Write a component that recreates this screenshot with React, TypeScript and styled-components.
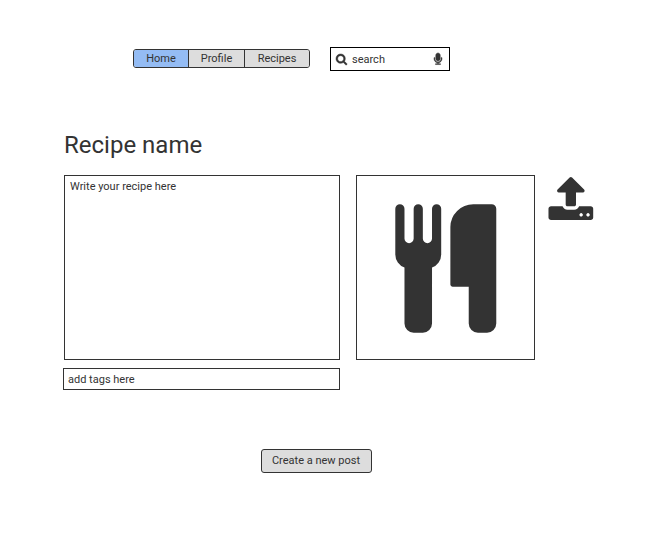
import React from "react";
import styled, { createGlobalStyle } from "styled-components";

const GlobalStyle = createGlobalStyle`
  * { box-sizing: border-box; }
  body {
    margin: 0;
    background: #fff;
    color: #333;
    font-family: Roboto, sans-serif;
    font-size: 11px;
    line-height: 13px;
  }
  button, input, textarea { font: inherit; color: inherit; }
`;

const Page = styled.main`
  height: 546px;
  overflow: hidden;
`;

const Header = styled.header`
  display: flex;
  align-items: flex-start;
  gap: 20px;
  padding: 47px 0 0 133px;
  height: 131px;
`;

const Nav = styled.nav`
  display: flex;
  width: 177px;
  height: 19px;
  margin-top: 2px;
  border: 1px solid #333;
  border-radius: 3px;
  background: #ddd;
  overflow: hidden;
`;

const NavItem = styled.button<{ $active?: boolean; $width: number }>`
  width: ${(p) => p.$width}px;
  padding: 0 0 1px;
  border: 0;
  background: ${(p) => (p.$active ? "#94bcf4" : "#ddd")};
  text-align: center;

  & + & { border-left: 1px solid #333; }
`;

const SearchBox = styled.label`
  display: flex;
  align-items: center;
  width: 120px;
  height: 24px;
  padding: 0 7px 0 5px;
  border: 1px solid #000;
`;

const SearchInput = styled.input`
  flex: 1;
  min-width: 0;
  margin-left: 5px;
  padding: 0;
  border: 0;
  outline: 0;
  background: transparent;

  &::placeholder { color: #333; opacity: 1; }
`;

const Icon = styled.svg`
  display: block;
  flex: none;
  fill: #333;
`;

const SmallIcon = styled(Icon)`
  overflow: visible;
  stroke: #333;
  stroke-width: 70;
`;

const Title = styled.h1`
  margin: 0 0 16px 64px;
  font-size: 24px;
  line-height: 28px;
  font-weight: 400;
`;

const Editor = styled.section`
  display: flex;
  align-items: flex-start;
  padding-left: 64px;
`;

const RecipeText = styled.textarea`
  display: block;
  width: 276px;
  height: 185px;
  margin: 0;
  padding: 4px 5px;
  border: 1px solid #333;
  border-radius: 0;
  outline: 0;
  resize: none;
  overflow: hidden;

  &::placeholder { color: #333; opacity: 1; }
`;

const Photo = styled.div`
  display: flex;
  align-items: flex-start;
  width: 179px;
  height: 185px;
  margin-left: 16px;
  padding: 28px 0 0 38px;
  border: 1px solid #333;
`;

const UploadButton = styled.button`
  margin: 2px 0 0 13px;
  padding: 0;
  border: 0;
  background: none;
`;

const Tags = styled.input`
  display: block;
  width: 277px;
  height: 22px;
  margin: 8px 0 0 63px;
  padding: 0 4px;
  border: 1px solid #333;
  border-radius: 0;
  outline: 0;

  &::placeholder { color: #333; opacity: 1; }
`;

const CreateButton = styled.button`
  display: block;
  width: 111px;
  height: 24px;
  margin: 59px 0 0 261px;
  padding: 0 1px 1px 0;
  border: 1px solid #333;
  border-radius: 3px;
  background: #ddd;
`;

const SearchIcon = () => (
  <SmallIcon width="11" height="11" viewBox="64 128 1664 1664">
    <path d="M1216 832q0-185-131.500-316.500t-316.500-131.500-316.500 131.500-131.500 316.500 131.500 316.500 316.500 131.500 316.500-131.500 131.500-316.500zM1728 1664q0 52-38 90t-90 38q-54 0-90-38l-343-342q-179 124-399 124-143 0-273.500-55.500t-225-150-150-225-55.500-273.500 55.500-273.500 150-225 225-150 273.500-55.500 273.500 55.500 225 150 150 225 55.500 273.500q0 220-124 399l343 343q37 37 37 90z" />
  </SmallIcon>
);

const MicIcon = () => (
  <SmallIcon width="8" height="13" viewBox="320 0 1152 1872">
    <path d="M1472 704v128q0 221-147.500 384.500t-364.500 187.500v132h256q26 0 45 19t19 45-19 45-45 19h-640q-26 0-45-19t-19-45 19-45 45-19h256v-132q-217-24-364.500-187.500t-147.500-384.500v-128q0-26 19-45t45-19 45 19 19 45v128q0 185 131.500 316.500t316.500 131.500 316.500-131.500 131.500-316.500v-128q0-26 19-45t45-19 45 19 19 45zM1216 320v512q0 132-94 226t-226 94-226-94-94-226v-512q0-132 94-226t226-94 226 94 94 226z" />
  </SmallIcon>
);

const CutleryIcon = () => (
  <Icon width="102" height="129" viewBox="-4 62 1422 1799">
    <path d="M640 128v640q0 61-35.500 111t-92.500 70v779q0 52-38 90t-90 38h-128q-52 0-90-38t-38-90v-779q-57-20-92.500-70t-35.500-111v-640q0-26 19-45t45-19 45 19 19 45v416q0 26 19 45t45 19 45-19 19-45v-416q0-26 19-45t45-19 45 19 19 45v416q0 26 19 45t45 19 45-19 19-45v-416q0-26 19-45t45-19 45 19 19 45zM1408 128v1600q0 52-38 90t-90 38h-128q-52 0-90-38t-38-90v-512h-224q-13 0-22.500-9.500t-9.500-22.500v-800q0-132 94-226t226-94h256q26 0 45 19t19 45z" />
  </Icon>
);

const UploadIcon = () => (
  <Icon width="46" height="43" viewBox="46 64 1712 1600">
    <path d="M1344 1472q0-26-19-45t-45-19-45 19-19 45 19 45 45 19 45-19 19-45zM1600 1472q0-26-19-45t-45-19-45 19-19 45 19 45 45 19 45-19 19-45zM1728 1248v320q0 40-28 68t-68 28h-1472q-40 0-68-28t-28-68v-320q0-40 28-68t68-28h427q21 56 70.500 92t110.500 36h256q61 0 110.500-36t70.500-92h427q40 0 68 28t28 68zM1403 600q-17 40-59 40h-256v448q0 26-19 45t-45 19h-256q-26 0-45-19t-19-45v-448h-256q-42 0-59-40-17-39 14-69l448-448q18-19 45-19t45 19l448 448q31 30 14 69z" />
  </Icon>
);

export default function App() {
  return (
    <Page>
      <GlobalStyle />
      <Header>
        <Nav>
          <NavItem $active $width={54}>Home</NavItem>
          <NavItem $width={56}>Profile</NavItem>
          <NavItem $width={65}>Recipes</NavItem>
        </Nav>
        <SearchBox>
          <SearchIcon />
          <SearchInput placeholder="search" />
          <MicIcon />
        </SearchBox>
      </Header>
      <Title>Recipe name</Title>
      <Editor>
        <RecipeText placeholder="Write your recipe here" />
        <Photo>
          <CutleryIcon />
        </Photo>
        <UploadButton aria-label="Upload">
          <UploadIcon />
        </UploadButton>
      </Editor>
      <Tags placeholder="add tags here" />
      <CreateButton>Create a new post</CreateButton>
    </Page>
  );
}
